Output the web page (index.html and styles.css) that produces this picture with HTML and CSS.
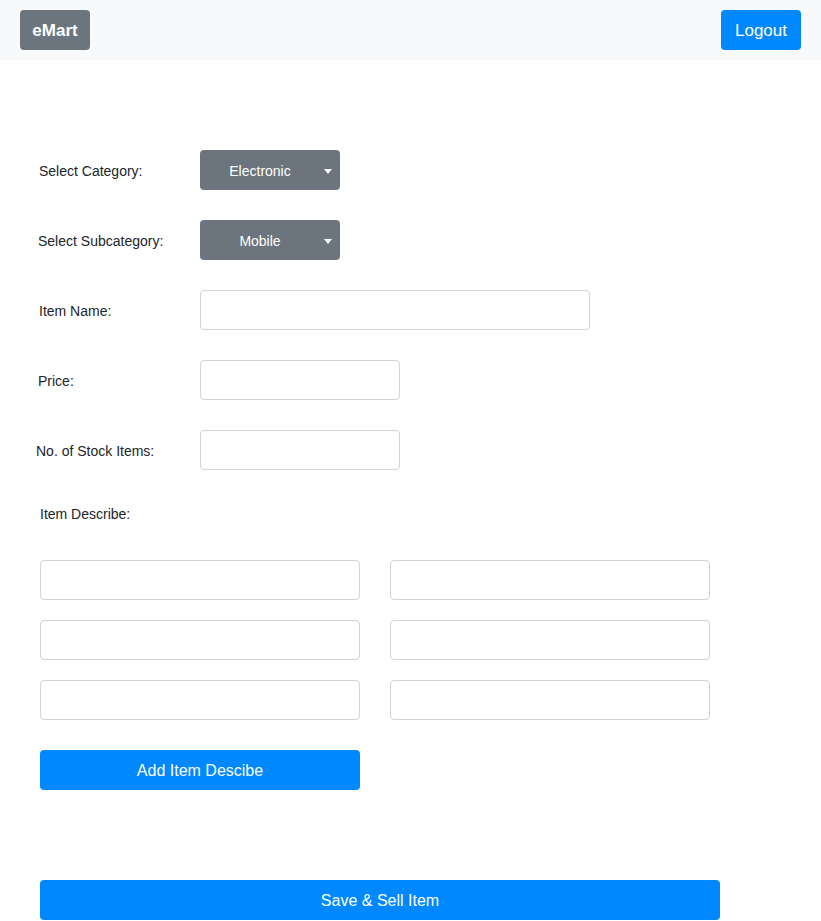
FILE: index.html
```html
<!DOCTYPE html>
<html>
<head>
<meta charset="utf-8">
<link rel="stylesheet" href="styles.css">
</head>
<body>
<nav class="navbar">
  <button class="brand">eMart</button>
  <button class="btn-primary logout">Logout</button>
</nav>
<main class="form">
  <div class="row">
    <label class="label">Select Category:</label>
    <button class="dropdown"><span>Electronic</span><span class="caret"></span></button>
  </div>
  <div class="row">
    <label class="label lbl-sub">Select Subcategory:</label>
    <button class="dropdown"><span>Mobile</span><span class="caret"></span></button>
  </div>
  <div class="row">
    <label class="label">Item Name:</label>
    <input class="input wide" type="text">
  </div>
  <div class="row">
    <label class="label lbl-price">Price:</label>
    <input class="input short" type="text">
  </div>
  <div class="row">
    <label class="label lbl-stock">No. of Stock Items:</label>
    <input class="input short" type="text">
  </div>
  <div class="describe-label">Item Describe:</div>
  <div class="describe-grid">
    <input class="input" type="text">
    <input class="input" type="text">
    <input class="input" type="text">
    <input class="input" type="text">
    <input class="input" type="text">
    <input class="input" type="text">
  </div>
  <button class="btn-primary add-btn">Add Item Descibe</button>
  <button class="btn-primary save-btn">Save &amp; Sell Item</button>
</main>
</body>
</html>
```
FILE: styles.css
```css
* { box-sizing: border-box; }
body {
  margin: 0;
  font-family: "Liberation Sans", Arial, sans-serif;
  color: #212529;
  background: #fff;
}
.navbar {
  height: 60px;
  background: #f8f9fa;
  display: flex;
  justify-content: space-between;
  align-items: center;
  padding: 0 20px;
}
button {
  font-family: "Liberation Sans", Arial, sans-serif;
  border: none;
  border-radius: 4px;
  color: #fff;
  cursor: pointer;
}
.brand {
  background: #6c757d;
  width: 70px;
  height: 40px;
  font-size: 17px;
  font-weight: bold;
  padding: 2px 0 0;
}
.btn-primary {
  background: #0088ff;
}
.logout {
  width: 80px;
  height: 40px;
  font-size: 17px;
  padding: 2px 0 0;
}
.form {
  padding-top: 90px;
  padding-left: 40px;
}
.row {
  display: flex;
  align-items: center;
  height: 40px;
  margin-bottom: 30px;
}
.label {
  font-size: 14px;
  width: 161px;
  margin-left: -1px;
  padding-top: 2px;
}
.lbl-sub, .lbl-price { margin-left: -2px; width: 162px; }
.lbl-stock { margin-left: -4px; width: 164px; }
.dropdown {
  width: 140px;
  height: 40px;
  background: #6c757d;
  font-size: 14px;
  position: relative;
  padding: 2px 20px 0 0;
}
.caret {
  position: absolute;
  right: 8px;
  top: 19px;
  width: 0;
  height: 0;
  border-left: 4.5px solid transparent;
  border-right: 4.5px solid transparent;
  border-top: 5px solid #fff;
}
.input {
  height: 40px;
  border: 1px solid #ced4da;
  border-radius: 4px;
  background: #fff;
  padding: 0 12px;
  font-size: 16px;
}
.wide { width: 390px; }
.short { width: 200px; }
.describe-label {
  font-size: 14px;
  line-height: 40px;
  margin-top: -6px;
}
.describe-grid {
  display: grid;
  grid-template-columns: 320px 320px;
  column-gap: 30px;
  row-gap: 20px;
  margin-top: 26px;
}
.describe-grid .input { width: 320px; }
.add-btn {
  display: block;
  width: 320px;
  height: 40px;
  font-size: 16px;
  margin-top: 30px;
  padding: 2px 0 0;
}
.save-btn {
  display: block;
  width: 680px;
  height: 40px;
  font-size: 16px;
  margin-top: 90px;
  padding: 2px 0 0;
}
```
